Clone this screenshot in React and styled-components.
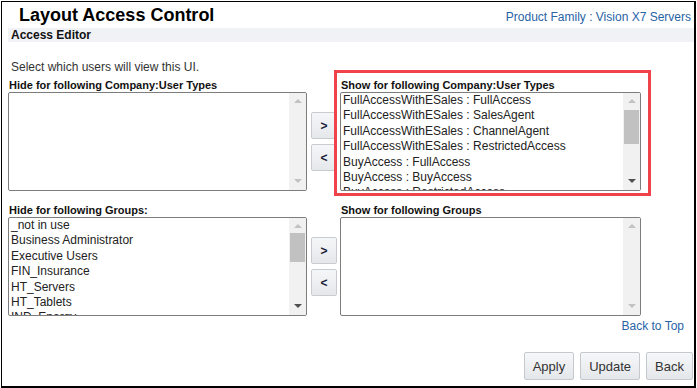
import React from "react";
import styled, { createGlobalStyle } from "styled-components";

const GlobalStyle = createGlobalStyle`
  html, body {
    margin: 0;
    padding: 0;
    background: #fff;
  }
  body {
    font-family: "Liberation Sans", Arial, sans-serif;
    color: #222;
  }
`;

const Frame = styled.div`
  box-sizing: border-box;
  width: 695px;
  height: 387px;
  margin: 1px 0 0 1px;
  border: 1px solid #000;
  border-right-width: 2px;
  border-bottom-width: 2px;
  display: flex;
  flex-direction: column;
`;

const Header = styled.div`
  height: 26px;
  display: flex;
  align-items: center;
  justify-content: space-between;
  padding: 0 3px 0 17px;
`;

const Title = styled.h1`
  margin: 0;
  font-size: 18px;
  font-weight: bold;
  color: #000;
  line-height: 26px;
`;

const FamilyLink = styled.a`
  font-size: 12px;
  color: #2863a6;
  text-decoration: none;
  padding-top: 4px;
`;

const SectionBar = styled.div`
  margin-left: 6px;
  height: 14px;
  line-height: 14px;
  background: #f1f2f6;
  font-size: 12px;
  font-weight: bold;
  padding-left: 3px;
  color: #111;
`;

const Body = styled.div`
  padding: 0 0 0 6px;
  display: flex;
  flex-direction: column;
`;

const Intro = styled.p`
  margin: 18px 0 0 3px;
  font-size: 12px;
  line-height: 14px;
  color: #333;
`;

const Row = styled.div`
  display: grid;
  grid-template-columns: 299px 26px 300px;
  column-gap: 4px;
  align-items: end;
  margin-top: ${(p) => p.$top}px;
`;

const Column = styled.div`
  position: relative;
  display: flex;
  flex-direction: column;
  margin-left: ${(p) => (p.$shift ? "-1px" : "0")};
`;

const Highlight = styled.span`
  position: absolute;
  top: -9px;
  left: -6px;
  right: -10px;
  bottom: -5px;
  border: 3px solid #f0424a;
  pointer-events: none;
`;

const Label = styled.div`
  font-size: 11px;
  font-weight: bold;
  line-height: 13px;
  color: #111;
  padding-left: 1px;
`;

const ListBox = styled.div`
  box-sizing: border-box;
  height: 99px;
  border: 1px solid #7d7d7d;
  border-radius: 2px;
  display: flex;
  overflow: hidden;
  background: #fff;
`;

const Items = styled.div`
  flex: 1;
  overflow: hidden;
  padding-left: 2px;
`;

const Item = styled.div`
  font-size: 12px;
  line-height: 15.4px;
  color: #222;
  white-space: nowrap;
`;

const ScrollTrack = styled.div`
  position: relative;
  width: 17px;
  background: #f1f1f1;
`;

const Arrow = styled.span`
  position: absolute;
  left: 5px;
  width: 0;
  height: 0;
  border-left: 4px solid transparent;
  border-right: 4px solid transparent;
  ${(p) =>
    p.$up
      ? `top: 6px; border-bottom: 4px solid ${p.$dark ? "#505050" : "#c2c2c2"};`
      : `bottom: 7px; border-top: 4px solid ${p.$dark ? "#505050" : "#c2c2c2"};`}
`;

const Thumb = styled.span`
  position: absolute;
  left: 1px;
  right: 1px;
  background: #c1c1c1;
`;

const MoveButtons = styled.div`
  height: 99px;
  display: flex;
  flex-direction: column;
  justify-content: center;
  gap: 5px;
`;

const MoveButton = styled.button`
  box-sizing: border-box;
  width: 26px;
  height: 27px;
  padding: 0;
  border: 1px solid #c8ccd1;
  border-radius: 2px;
  background: linear-gradient(#f5f6f8, #e5e8eb);
  font-family: "Liberation Sans", Arial, sans-serif;
  font-size: 12px;
  font-weight: bold;
  color: #1b1b3a;
`;

const BackToTop = styled.a`
  align-self: flex-end;
  margin: 3px 10px 0 0;
  font-size: 12px;
  line-height: 14px;
  color: #2863a6;
  text-decoration: none;
`;

const Footer = styled.div`
  display: flex;
  justify-content: flex-end;
  gap: 6px;
  margin-top: 19px;
  padding-right: 1px;
`;

const ActionButton = styled.button`
  box-sizing: border-box;
  height: 28px;
  padding: 0 8px;
  border: 1px solid #c5c9ce;
  border-radius: 2px;
  background: linear-gradient(#f6f7f9, #e4e7ea);
  font-family: "Liberation Sans", Arial, sans-serif;
  font-size: 13px;
  color: #333;
`;

function List({ items = [], thumb }) {
  return (
    <ListBox>
      <Items>
        {items.map((it) => (
          <Item key={it}>{it}</Item>
        ))}
      </Items>
      <ScrollTrack>
        <Arrow $up />
        {thumb && <Thumb style={{ top: thumb[0], height: thumb[1] }} />}
        <Arrow $dark={!!thumb} />
      </ScrollTrack>
    </ListBox>
  );
}

function Movers() {
  return (
    <MoveButtons>
      <MoveButton>&gt;</MoveButton>
      <MoveButton>&lt;</MoveButton>
    </MoveButtons>
  );
}

const shownTypes = [
  "FullAccessWithESales : FullAccess",
  "FullAccessWithESales : SalesAgent",
  "FullAccessWithESales : ChannelAgent",
  "FullAccessWithESales : RestrictedAccess",
  "BuyAccess : FullAccess",
  "BuyAccess : BuyAccess",
  "BuyAccess : RestrictedAccess",
];

const hiddenGroups = [
  "_not in use",
  "Business Administrator",
  "Executive Users",
  "FIN_Insurance",
  "HT_Servers",
  "HT_Tablets",
  "IND_Energy",
];

export default function App() {
  return (
    <>
      <GlobalStyle />
      <Frame>
        <Header>
          <Title>Layout Access Control</Title>
          <FamilyLink>Product Family : Vision X7 Servers</FamilyLink>
        </Header>
        <SectionBar>Access Editor</SectionBar>
        <Body>
          <Intro>Select which users will view this UI.</Intro>
          <Row $top={5}>
            <Column>
              <Label>Hide for following Company:User Types</Label>
              <List />
            </Column>
            <Movers />
            <Column $shift>
              <Highlight />
              <Label>Show for following Company:User Types</Label>
              <List items={shownTypes} thumb={[17, 34]} />
            </Column>
          </Row>
          <Row $top={13}>
            <Column>
              <Label>Hide for following Groups:</Label>
              <List items={hiddenGroups} thumb={[15, 29]} />
            </Column>
            <Movers />
            <Column $shift>
              <Label>Show for following Groups</Label>
              <List />
            </Column>
          </Row>
          <BackToTop>Back to Top</BackToTop>
          <Footer>
            <ActionButton>Apply</ActionButton>
            <ActionButton>Update</ActionButton>
            <ActionButton>Back</ActionButton>
          </Footer>
        </Body>
      </Frame>
    </>
  );
}
